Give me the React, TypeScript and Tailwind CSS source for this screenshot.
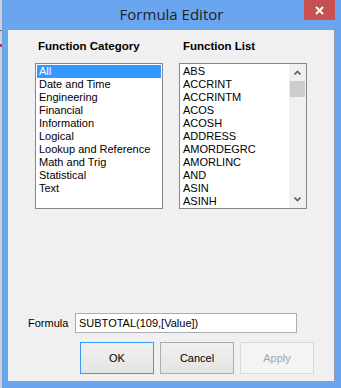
import React from "react";

const categories = [
  "All",
  "Date and Time",
  "Engineering",
  "Financial",
  "Information",
  "Logical",
  "Lookup and Reference",
  "Math and Trig",
  "Statistical",
  "Text",
];

const functions = [
  "ABS",
  "ACCRINT",
  "ACCRINTM",
  "ACOS",
  "ACOSH",
  "ADDRESS",
  "AMORDEGRC",
  "AMORLINC",
  "AND",
  "ASIN",
  "ASINH",
];

const ui = "font-['Liberation_Sans',Arial,sans-serif] text-[11px] leading-[13px]";

function Chevron({ up }: { up?: boolean }) {
  return (
    <svg width="7" height="5" viewBox="0 0 7 5" className="block">
      <path
        d={up ? "M0.5 4.5 L3.5 1.5 L6.5 4.5" : "M0.5 0.5 L3.5 3.5 L6.5 0.5"}
        fill="none"
        stroke="#606060"
        strokeWidth="1.6"
      />
    </svg>
  );
}

export default function App() {
  return (
    <div className={`w-[341px] h-[388px] flex bg-[#6aa6ef] overflow-hidden ${ui}`}>
      {/* edge of the window behind */}
      <div className="w-[2px] flex flex-col bg-[#cfd0d2]">
        <div className="h-[30px]" />
        <div className="h-[1px] bg-[#6b6b6b]" />
        <div className="h-[13px]" />
        <div className="h-[3px] bg-[#c0305a]" />
      </div>

      <div className="flex-1 flex flex-col px-[6px] pb-[6px]">
        {/* title bar */}
        <div className="relative h-[30px] flex items-center justify-center">
          <span className="font-['Open_Sans',sans-serif] text-[15px] text-[#222] -mt-[1px]">
            Formula Editor
          </span>
          <div className="absolute right-0 top-0 w-[31px] h-[20px] bg-[#c75050] flex items-center justify-center">
            <svg width="9" height="9" viewBox="0 0 9 9">
              <path d="M1 1 L8 8 M8 1 L1 8" stroke="#fff" strokeWidth="2" />
            </svg>
          </div>
        </div>

        {/* client area */}
        <div className="flex-1 flex flex-col bg-[#f0f0f0] border-r border-b border-[#8e9bab]">
          <div className="flex mt-[10px]">
            <div className="ml-[27px] w-[128px] flex flex-col">
              <div className="pl-[3px] font-bold text-[11.5px] text-black">Function Category</div>
              <div className="mt-[10px] h-[146px] border border-[#828790] bg-white p-[1px]">
                {categories.map((c, i) => (
                  <div
                    key={c}
                    className={`h-[13px] pl-[2px] whitespace-nowrap ${
                      i === 0 ? "bg-[#3399ff] text-white" : "text-black"
                    }`}
                  >
                    {c}
                  </div>
                ))}
              </div>
            </div>

            <div className="ml-[16px] w-[128px] flex flex-col">
              <div className="pl-[4px] font-bold text-[11.5px] text-black">Function List</div>
              <div className="mt-[10px] h-[146px] border border-[#828790] bg-white flex">
                <div className="flex-1 overflow-hidden pt-[1px] pl-[3px]">
                  {functions.map((f) => (
                    <div key={f} className="h-[13px] text-black whitespace-nowrap">
                      {f}
                    </div>
                  ))}
                </div>
                <div className="w-[17px] bg-[#f0f0f0] flex flex-col">
                  <div className="h-[17px] flex items-center justify-center">
                    <Chevron up />
                  </div>
                  <div className="flex-1 flex flex-col px-[1px]">
                    <div className="h-[16px] bg-[#cdcdcd]" />
                  </div>
                  <div className="h-[17px] flex items-center justify-center">
                    <Chevron />
                  </div>
                </div>
              </div>
            </div>
          </div>

          {/* formula */}
          <div className="flex items-center mt-[104px] ml-[20px]">
            <span className="w-[47px] text-black">Formula</span>
            <div className="w-[222px] h-[20px] border border-[#abadb3] bg-white flex items-center pl-[3px] text-black">
              SUBTOTAL(109,[Value])
            </div>
          </div>

          {/* buttons */}
          <div className="flex gap-[6px] mt-[9px] ml-[72px]">
            <button className="w-[74px] h-[32px] border border-[#3c98f5] bg-gradient-to-b from-[#f0f0f0] to-[#e4e4e4] text-black">
              OK
            </button>
            <button className="w-[74px] h-[32px] border border-[#acacac] bg-gradient-to-b from-[#f0f0f0] to-[#e4e4e4] text-black">
              Cancel
            </button>
            <button className="w-[74px] h-[32px] border border-[#d9d9d9] bg-[#f4f4f4] text-[#a3a7ad]">
              Apply
            </button>
          </div>
        </div>
      </div>
    </div>
  );
}
